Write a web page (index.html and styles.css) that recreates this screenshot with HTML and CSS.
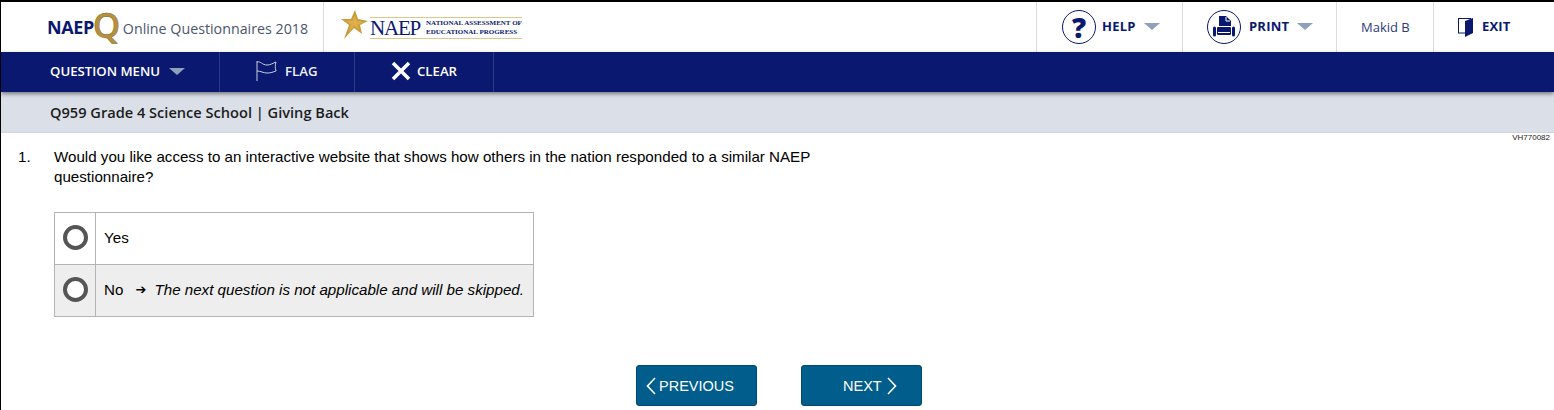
FILE: index.html
```html
<!DOCTYPE html>
<html lang="en">
<head>
    <meta charset="UTF-8">
    <title>NAEP Online Questionnaires 2018</title>
    <link rel="stylesheet" href="styles.css">
</head>
<body>
    <div class="page">
        <header class="top-bar">
            <div class="brand">
                <span class="brand-naep">NAEP</span><span class="brand-q">Q</span>
                <span class="brand-title">Online Questionnaires 2018</span>
            </div>
            <div class="partner">
                <svg class="partner-star" width="28" height="30" viewBox="0 0 28 30">
                    <polygon points="14,0 17,9 27,11 19,15 21,24 13,18 3,29 8,15 0,9 10,9" fill="#c79a3a"/>
                    <polygon points="14,5 15.500,10.500 23,12 17,15 18,20 13,16 7,23 10,14.500 4,10.500 11.500,10.500" fill="#dcae4a"/>
                </svg>
                <div class="partner-lines">
                    <span class="partner-naep">NAEP</span>
                    <span class="partner-full">NATIONAL ASSESSMENT OF<br>EDUCATIONAL PROGRESS</span>
                </div>
            </div>
            <div class="top-spacer"></div>
            <div class="top-item item-help">
                <span class="round-icon"><span class="help-mark">?</span></span>
                <span class="top-label">HELP</span>
                <span class="caret"></span>
            </div>
            <div class="top-item item-print">
                <span class="round-icon">
                    <svg width="24" height="22" viewBox="0 0 24 22">
                        <path d="M7 0h7l5 5v5H7z" fill="#0b1870"/>
                        <path d="M14 1v4h4" fill="none" stroke="#fff" stroke-width="1"/>
                        <rect x="5" y="11" width="14" height="8" rx="1" fill="#0b1870"/>
                        <rect x="6" y="16" width="12" height="1" fill="#fff"/>
                        <path d="M2.500 12v7M21.500 12v7" stroke="#0b1870" stroke-width="3" stroke-linecap="round"/>
                    </svg>
                </span>
                <span class="top-label">PRINT</span>
                <span class="caret"></span>
            </div>
            <div class="top-item item-user">Makid B</div>
            <div class="top-item item-exit">
                <svg width="16" height="19" viewBox="0 0 16 19">
                    <rect x="0.500" y="0.500" width="12" height="14.500" fill="none" stroke="#0b1870" stroke-width="1"/>
                    <path d="M7 3l8-3v15l-8 4z" fill="#0b1870"/>
                </svg>
                <span class="top-label">EXIT</span>
            </div>
        </header>

        <nav class="menu-bar">
            <div class="menu-item menu-question">QUESTION MENU <span class="caret"></span></div>
            <div class="menu-item menu-flag">
                <svg width="21" height="22" viewBox="0 0 21 22">
                    <path d="M1 1v20" stroke="#c8cde0" stroke-width="1"/>
                    <path d="M1 2c4-1 5 3 10 3 4 0 6-2 9-3-1 3-1 6 0 9-3 1-5 2-9 2-4 0-6-2-10-2" fill="none" stroke="#c8cde0" stroke-width="1"/>
                </svg>
                FLAG
            </div>
            <div class="menu-item menu-clear">
                <svg width="20" height="20" viewBox="0 0 20 20">
                    <path d="M2 2l16 16M18 2L2 18" stroke="#fff" stroke-width="3.500"/>
                </svg>
                CLEAR
            </div>
        </nav>

        <div class="title-bar">Q959 Grade 4 Science School | Giving Back</div>

        <main class="content">
            <div class="item-code">VH770082</div>
            <div class="question">
                <span class="question-num">1.</span>
                <p class="question-text">Would you like access to an interactive website that shows how others in the nation responded to a similar NAEP questionnaire?</p>
            </div>
            <div class="choices">
                <div class="choice">
                    <div class="choice-radio"><span class="radio"></span></div>
                    <div class="choice-text">Yes</div>
                </div>
                <div class="choice choice-alt">
                    <div class="choice-radio"><span class="radio"></span></div>
                    <div class="choice-text">No <span class="arrow">➔</span> <em>The next question is not applicable and will be skipped.</em></div>
                </div>
            </div>
            <div class="buttons">
                <button class="nav-btn btn-prev">
                    <svg width="10" height="18" viewBox="0 0 10 18"><path d="M9 1L1.500 9 9 17" fill="none" stroke="#fff" stroke-width="1.600"/></svg>
                    PREVIOUS
                </button>
                <button class="nav-btn btn-next">
                    NEXT
                    <svg width="10" height="18" viewBox="0 0 10 18"><path d="M1 1l7.500 8L1 17" fill="none" stroke="#fff" stroke-width="1.600"/></svg>
                </button>
            </div>
        </main>
    </div>
</body>
</html>
```

FILE: styles.css
```css
html, body {
    margin: 0;
    padding: 0;
    background: #fff;
}
body {
    height: 410px;
    overflow: hidden;
}
.page {
    height: 408px;
    border-top: 2px solid #000;
    border-left: 1px solid #000;
    font-family: 'Open Sans', sans-serif;
    color: #0b1870;
}
.top-bar {
    height: 50px;
    display: flex;
    align-items: stretch;
}
.brand {
    width: 323px;
    box-sizing: border-box;
    padding-left: 46px;
    display: flex;
    align-items: center;
    border-right: 1px solid #dcdcdc;
}
.brand-naep {
    font-size: 18px;
    font-weight: 700;
    letter-spacing: -0.4px;
}
.brand-q {
    width: 27px;
    font-size: 35px;
    line-height: 36px;
    font-weight: 600;
    color: #b5913f;
    -webkit-text-stroke: 0.4px #7d6221;
    margin-left: -1px;
    margin-right: 3px;
    margin-top: -4px;
}
.brand-title {
    font-size: 14.250px;
    color: #4b5570;
    margin-top: 2px;
}
.partner {
    width: 200px;
    box-sizing: border-box;
    padding-left: 17px;
    display: flex;
    align-items: center;
}
.partner-star {
    margin-right: 1px;
    margin-top: -4px;
    flex-shrink: 0;
}
.partner-lines {
    display: flex;
    align-items: center;
    gap: 6px;
    border-top: 1px solid #dcc88a;
    border-bottom: 1px solid #dcc88a;
    height: 20px;
    margin-top: 2px;
    color: #0b1870;
    font-family: 'Liberation Serif', serif;
}
.partner-naep {
    font-size: 21px;
    letter-spacing: -1.200px;
}
.partner-full {
    font-size: 7px;
    line-height: 9px;
    font-weight: 700;
    white-space: nowrap;
}
.top-spacer {
    flex: 1;
}
.top-item {
    display: flex;
    align-items: center;
    box-sizing: border-box;
    border-left: 1px solid #dcdcdc;
}
.item-help {
    width: 146px;
    padding-left: 25px;
}
.item-print {
    width: 154px;
    padding-left: 24px;
}
.item-print .top-label {
    margin-left: 8px;
}
.item-print .caret {
    margin-left: 7px;
}
.item-user {
    width: 97px;
    padding-left: 24px;
    font-size: 13px;
    color: #2b3a7c;
}
.item-exit {
    width: 121px;
    padding-left: 24px;
}
.item-exit .top-label {
    margin-left: 8px;
}
.round-icon {
    width: 32px;
    height: 32px;
    border: 1px solid #0b1870;
    border-radius: 50%;
    display: flex;
    align-items: center;
    justify-content: center;
    flex-shrink: 0;
}
.help-mark {
    font-size: 28px;
    line-height: 32px;
    font-weight: 800;
}
.top-label {
    margin-left: 6px;
    font-size: 13px;
    font-weight: 700;
    letter-spacing: 0.2px;
    margin-top: -3px;
}
.caret {
    display: inline-block;
    width: 0;
    height: 0;
    border-left: 8px solid transparent;
    border-right: 8px solid transparent;
    border-top: 7px solid #8fa0bd;
}
.top-item .caret {
    margin-left: 8px;
    margin-top: -1px;
}
.menu-bar {
    height: 40px;
    display: flex;
    background: #0b1870;
    color: #fff;
    box-shadow: 0 2px 4px rgba(0, 0, 0, 0.45);
    position: relative;
    font-size: 13.200px;
    font-weight: 600;
}
.menu-item {
    display: flex;
    align-items: center;
    box-sizing: border-box;
    padding-bottom: 2px;
    border-right: 1px solid #2c3a85;
}
.menu-question {
    width: 219px;
    padding-left: 49px;
}
.menu-question .caret {
    margin-left: 9px;
}
.menu-flag {
    width: 135px;
    padding-left: 36px;
    gap: 8px;
    color: #eef0f7;
}
.menu-clear {
    width: 139px;
    padding-left: 36px;
    gap: 6px;
}
.title-bar {
    height: 41px;
    box-sizing: border-box;
    padding: 0 0 0 49px;
    display: flex;
    align-items: center;
    background: #dbe0e8;
    border-bottom: 1px solid #cfd4dd;
    color: #1c1c1c;
    font-size: 14.600px;
    font-weight: 600;
}
.content {
    font-family: 'Liberation Sans', Arial, sans-serif;
    font-size: 15.150px;
    color: #000;
    position: relative;
}
.item-code {
    position: absolute;
    right: 4px;
    top: 0;
    font-size: 8px;
    color: #222;
}
.question {
    display: flex;
    padding: 14px 0 0 17px;
}
.question-num {
    width: 36px;
    line-height: 20px;
}
.question-text {
    margin: 0;
    width: 790px;
    line-height: 20px;
}
.choices {
    width: 478px;
    margin: 25px 0 0 53px;
    border: 1px solid #b4b4b4;
}
.choice {
    display: flex;
    height: 51px;
}
.choice-alt {
    height: 51px;
    background: #eeeeee;
    border-top: 1px solid #b4b4b4;
}
.choice-radio {
    width: 41px;
    padding-bottom: 2px;
    box-sizing: border-box;
    display: flex;
    align-items: center;
    justify-content: center;
    border-right: 1px solid #b4b4b4;
}
.radio {
    width: 17px;
    height: 17px;
    border: 4px solid #555;
    border-radius: 50%;
    background: #fff;
}
.choice-text {
    display: flex;
    align-items: center;
    gap: 4px;
    padding: 0 0 2px 8px;
    white-space: pre;
}
.arrow {
    font-family: 'DejaVu Sans', sans-serif;
    font-size: 13px;
    margin: 0 4px;
}
.buttons {
    display: flex;
    gap: 44px;
    margin: 48px 0 0 635px;
}
.nav-btn {
    width: 121px;
    height: 41px;
    display: flex;
    align-items: center;
    gap: 3px;
    padding: 0;
    background: #005d8c;
    border: 1px solid #004a70;
    border-radius: 3px;
    color: #fff;
    font-family: 'Liberation Sans', Arial, sans-serif;
    font-size: 14.500px;
}
.btn-prev {
    padding-left: 9px;
}
.btn-next {
    padding-left: 41px;
    gap: 5px;
}
```
